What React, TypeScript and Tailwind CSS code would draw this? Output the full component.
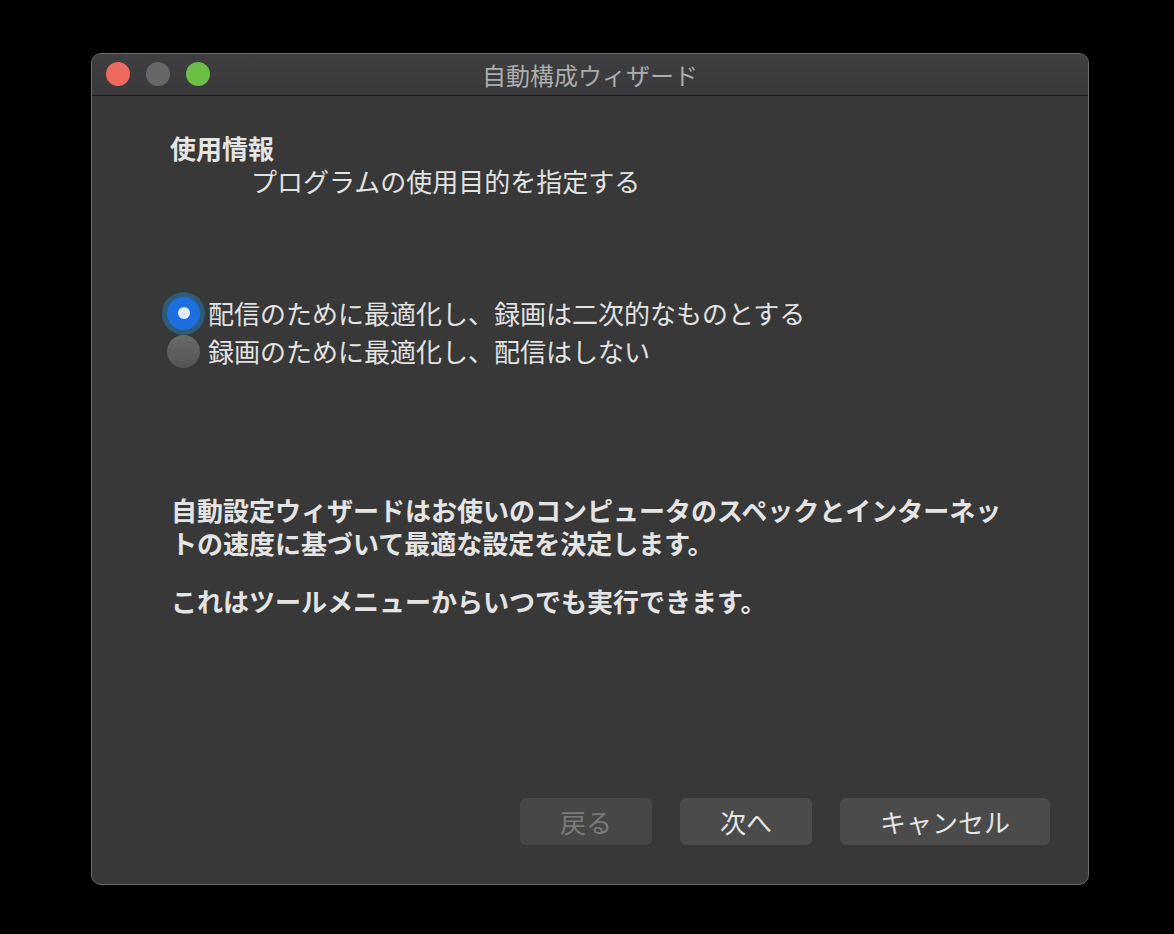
const font = { fontFamily: '"Noto Sans CJK JP", "Noto Sans", sans-serif' };

const TrafficLights = () => (
  <div className="absolute left-[14px] top-[8px] flex gap-[16px]">
    <div className="w-[24px] h-[24px] rounded-full bg-[#ed6a5e]" />
    <div className="w-[24px] h-[24px] rounded-full bg-[#67676a]" />
    <div className="w-[24px] h-[24px] rounded-full bg-[#6cbe46]" />
  </div>
);

interface RadioRowProps {
  label: string;
  checked?: boolean;
}

const RadioRow = ({ label, checked }: RadioRowProps) => (
  <div className="flex items-center h-[38px] gap-[8px] -ml-[3px]">
    {checked ? (
      <div className="w-[33px] h-[33px] rounded-full bg-[#1d6ee0] ring-[5px] ring-[#2e5b78] flex items-center justify-center">
        <div className="w-[12px] h-[12px] rounded-full bg-[#e4ecff]" />
      </div>
    ) : (
      <div className="w-[33px] h-[33px] rounded-full bg-gradient-to-b from-[#6a6a6a] to-[#545454]" />
    )}
    <span className="text-[26px] leading-[38px] text-[#e2e2e2]">{label}</span>
  </div>
);

const App = () => {
  return (
    <div lang="ja" className="w-[1174px] h-[934px] bg-black pt-[53px] pl-[91px]" style={font}>
      <div className="w-[998px] h-[832px] rounded-[10px] border border-[#6b6b6b] bg-[#383838] flex flex-col overflow-hidden">
        {/* Title bar */}
        <div className="relative h-[42px] shrink-0 bg-gradient-to-b from-[#3f3f41] to-[#39393b] border-b border-[#1a1a1a] flex items-center justify-center">
          <TrafficLights />
          <span className="text-[24px] text-[#acacac] leading-none">自動構成ウィザード</span>
        </div>

        {/* Body */}
        <div className="flex-1 flex flex-col pl-[78px] pt-[35px] pr-[38px] pb-[39px]">
          <div className="text-[26px] leading-[33px] font-bold text-[#e4e4e4]">使用情報</div>
          <div className="text-[26px] leading-[33px] text-[#e2e2e2] ml-[81px]">
            プログラムの使用目的を指定する
          </div>

          <div className="mt-[97px] flex flex-col">
            <RadioRow label="配信のために最適化し、録画は二次的なものとする" checked />
            <RadioRow label="録画のために最適化し、配信はしない" />
          </div>

          <div className="mt-[123px] w-[840px] text-[26px] leading-[33px] font-bold text-[#e4e4e4] ml-[1px]">
            自動設定ウィザードはお使いのコンピュータのスペックとインターネットの速度に基づいて最適な設定を決定します。
          </div>
          <div className="mt-[25px] text-[26px] leading-[33px] font-bold text-[#e4e4e4] ml-[1px]">
            これはツールメニューからいつでも実行できます。
          </div>

          <div className="mt-auto flex justify-end gap-[28px]">
            <button className="w-[132px] h-[47px] rounded-[6px] bg-[#474747] text-[26px] text-[#7a7a7a]">
              戻る
            </button>
            <button className="w-[132px] h-[47px] rounded-[6px] bg-[#4b4b4b] text-[26px] text-[#e4e4e4]">
              次へ
            </button>
            <button className="w-[210px] h-[47px] rounded-[6px] bg-[#4b4b4b] text-[26px] text-[#e4e4e4]">
              キャンセル
            </button>
          </div>
        </div>
      </div>
    </div>
  );
};

export default App;
